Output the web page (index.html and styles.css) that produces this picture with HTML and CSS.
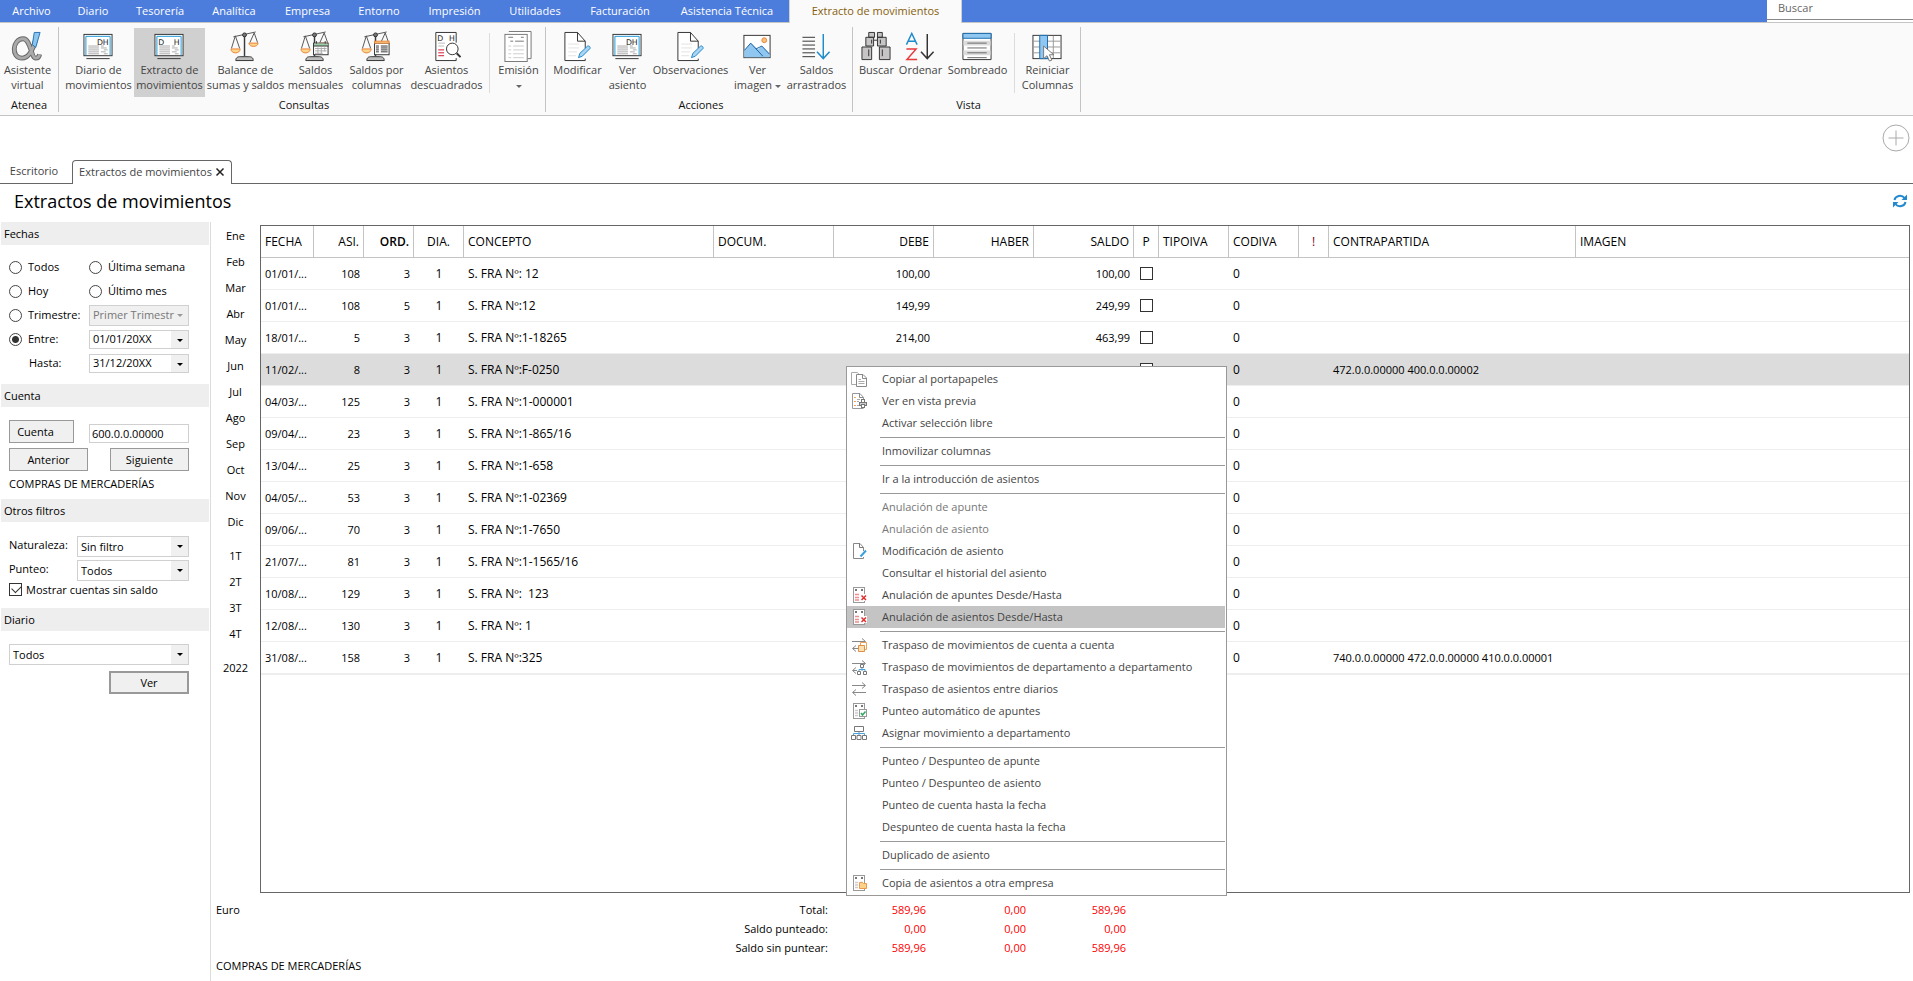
FILE: index.html
```html
<!DOCTYPE html>
<html lang="es">
<head>
<meta charset="utf-8">
<title>Extractos de movimientos</title>
<link rel="stylesheet" href="styles.css">
</head>
<body>
<svg class="defs" aria-hidden="true">
  <defs>
    <symbol id="scales" viewBox="0 0 32 32">
      <path d="M15.500 5V26" stroke="#3b3b3b" stroke-width="1.500" fill="none"/>
      <path d="M4 6L27 1M6 5L2 18M6 5L10.500 18M25.500 2L21 12M25.500 2L29 12" stroke="#555" fill="none"/>
      <circle cx="15.500" cy="4" r="2" fill="#777" stroke="#333"/>
      <path d="M1.500 18.500H11C11 24 1.500 24 1.500 18.500ZM20 12.500H29.500C29.500 17 20 17 20 12.500Z" fill="#fbd58a" stroke="#e8833a"/>
      <path d="M6.500 30.500C6.500 27 9 26.500 11 26.500H20C22 26.500 24.500 27 24.500 30.500Z" fill="#bdbdbd" stroke="#333"/>
    </symbol>
    <symbol id="sheet-pen" viewBox="0 0 32 32">
      <path d="M24.500 18V10.500L16.500 1.500H3.500V30.500H24.500V28.500" fill="#fff" stroke="#333"/>
      <path d="M16.500 1.500V10.500H24.500" fill="none" stroke="#333"/>
      <path d="M7 13.500H18M7 17.500H18M7 21.500H16M7 25.500H15" stroke="#e2e2e2"/>
      <path d="M17.500 27.500L19 23L27 15.500C28.500 15 30 16.500 29.500 18L21.500 26Z" fill="#a9d4f2" stroke="#2389c9"/>
    </symbol>
    <symbol id="journal" viewBox="0 0 32 32">
      <rect x="1.500" y="3.500" width="29" height="22" fill="#fff" stroke="#333"/>
      <path d="M3.500 25V5.500H28.500V25" fill="none" stroke="#1c9ad6"/>
      <path d="M6 15.500H17M6 17.500H17M6 19.500H17M6 21.500H17M6 23.500H17M19 15.500H22M19 17.500H25M22 19.500H26M19 21.500H24M22 23.500H26" stroke="#aaa"/>
      <path d="M4 28.500H28" stroke="#333"/>
    </symbol>
    <symbol id="mini-sheet" viewBox="0 0 16 16">
      <rect x="2.500" y=".5" width="11" height="15" fill="#fff" stroke="#999"/>
      <path d="M4 3H6M10 3H12" stroke="#777" stroke-width="2"/>
      <path d="M4 7.500H7M4 10H7M4 12.500H7M9 7.500H12" stroke="#ccc" stroke-width="1.500"/>
    </symbol>
    <symbol id="mini-void" viewBox="0 0 16 16">
      <rect x="2.500" y=".5" width="11" height="15" fill="#fff" stroke="#999"/>
      <path d="M4 3H6M10 3H12" stroke="#777" stroke-width="2"/>
      <path d="M4 7.500H8M4 10.500H8M4 13H8" stroke="#f08c8c" stroke-width="1.500"/>
      <path d="M9 7H16V14H9Z" fill="#fff"/>
      <path d="M10.500 8.500L15 13M15 8.500L10.500 13" stroke="#e03030" stroke-width="1.500"/>
    </symbol>
    <symbol id="swap" viewBox="0 0 16 16">
      <path d="M1 4.500H14M11 1.500L14.500 4.500L11 7.500M15 11.500H2M5 8.500L1.500 11.500L5 14.500" fill="none" stroke="#888"/>
    </symbol>
  </defs>
</svg>

<header class="top">
  <nav class="menubar">
    <button>Archivo</button><button>Diario</button><button>Tesorería</button><button>Analítica</button><button>Empresa</button><button>Entorno</button><button>Impresión</button><button>Utilidades</button><button>Facturación</button><button>Asistencia Técnica</button><button class="current">Extracto de movimientos</button>
  </nav>
  <input class="search" type="text" placeholder="Buscar" aria-label="Buscar">
</header>

<section class="ribbon">
  <div class="group g-atenea">
    <div class="tools">
      <button class="tool"><svg class="ico" viewBox="0 0 32 32"><path d="M25 9C22 20 18 28 11 28C-1 28 1 8 12 8C20 8 20 28 25 28C27 28 28.500 27 29 24" fill="none" stroke="#666" stroke-width="5"/><path d="M25 9C22 20 18 28 11 28C-1 28 1 8 12 8C20 8 20 28 25 28C27 28 28.500 27 29 24" fill="none" stroke="#aaa" stroke-width="3"/><path d="M23.500 1.500L29.500 1.500L25 17L21.500 14Z" fill="#8cc6ee" stroke="#2874b5"/></svg><span>Asistente<br>virtual</span></button>
    </div>
    <h2>Atenea</h2>
  </div>
  <div class="group g-consultas">
    <div class="tools">
      <button class="tool"><svg class="ico" viewBox="0 0 32 32"><use href="#journal"/><text x="15" y="14" class="dh">D</text><text x="21" y="14" class="dh">H</text></svg><span>Diario de<br>movimientos</span></button>
      <button class="tool pressed"><svg class="ico" viewBox="0 0 32 32"><use href="#journal"/><text x="5" y="14" class="dh">D</text><text x="21" y="14" class="dh">H</text></svg><span>Extracto de<br>movimientos</span></button>
      <button class="tool"><svg class="ico"><use href="#scales"/></svg><span>Balance de<br>sumas y saldos</span></button>
      <button class="tool"><svg class="ico" viewBox="0 0 32 32"><use href="#scales"/><rect x="14.500" y="12.500" width="15" height="12" fill="#fff" stroke="#333"/><path d="M15 13H29V15.500H15Z" fill="#9ecfa8"/><path d="M17.500 10.500V13M26.500 10.500V13M14 15.500H30" stroke="#333"/><path d="M16 18H28M16 20.500H28M16 23H24M19 17V24M22.500 17V24M26 17V21" stroke="#aaa"/></svg><span>Saldos<br>mensuales</span></button>
      <button class="tool"><svg class="ico" viewBox="0 0 32 32"><use href="#scales"/><rect x="14.500" y="12.500" width="15" height="12" fill="#fff" stroke="#333"/><rect x="14.500" y="10.500" width="15" height="2" fill="#fbd58a" stroke="#e8833a"/><path d="M16 15.500H19M21 15.500H28M16 17.500H19M21 17.500H28M16 19.500H19M21 19.500H28M16 21.500H19M21 21.500H28" stroke="#333"/></svg><span>Saldos por<br>columnas</span></button>
      <button class="tool"><svg class="ico" viewBox="0 0 32 32"><path d="M26.500 12V1.500H5.500V30.500H26.500V28" fill="#fff" stroke="#333"/><text x="7" y="10" class="dh">D</text><text x="19" y="10" class="dh">H</text><path d="M8 12.500H15M8 15.500H14" stroke="#bbb"/><path d="M8 19.500H14M8 22.500H14M8 25.500H14" stroke="#d4122c"/><circle cx="22.500" cy="18.500" r="6" fill="#fff" stroke="#333"/><path d="M27 23L31 27" stroke="#333" stroke-width="2"/></svg><span>Asientos<br>descuadrados</span></button>
      <i class="rule"></i>
      <button class="tool"><svg class="ico" viewBox="0 0 32 32"><path d="M6.500 .5H29.500V28.500H26" fill="#fff" stroke="#777"/><rect x="2.500" y="3.500" width="23" height="28" fill="#fff" stroke="#777"/><path d="M6 6.500H11M19 6.500H22M8 10.500H11M13 10.500H22" stroke="#777"/><path d="M6 15.500H9M11 15.500H22M6 19.500H9M11 19.500H22M6 23.500H9M11 23.500H22M6 27.500H9M11 27.500H22" stroke="#ccc"/></svg><span>Emisión<br><i class="tri"></i></span></button>
    </div>
    <h2>Consultas</h2>
  </div>
  <div class="group g-acciones">
    <div class="tools">
      <button class="tool"><svg class="ico"><use href="#sheet-pen"/></svg><span>Modificar</span></button>
      <button class="tool"><svg class="ico" viewBox="0 0 32 32"><use href="#journal"/><text x="15" y="14" class="dh">D</text><text x="21" y="14" class="dh">H</text></svg><span>Ver<br>asiento</span></button>
      <button class="tool"><svg class="ico"><use href="#sheet-pen"/></svg><span>Observaciones</span></button>
      <button class="tool"><svg class="ico" viewBox="0 0 32 32"><rect x="2.500" y="4.500" width="27" height="23" fill="#fff" stroke="#333"/><path d="M3 20L9.500 12.500L17 19L21 15.500L29 23.500V27H3Z" fill="#8fc7f0"/><path d="M3 20L9.500 12.500L22 26M15 18.500L21 15.500L29 24" fill="none" stroke="#1a5fa0"/><circle cx="23.500" cy="9.500" r="2.500" fill="#fbc07c" stroke="#e8833a"/></svg><span>Ver<br>imagen <i class="tri"></i></span></button>
      <button class="tool"><svg class="ico" viewBox="0 0 32 32"><path d="M2 6.500H15M2 10.500H15M2 14.500H15M2 18.500H15M2 22.500H15M2 26.500H15" stroke="#333"/><path d="M23.500 3V28M17 21.500L23.500 28.500L30 21.500" fill="none" stroke="#1f8ccb" stroke-width="1.500"/></svg><span>Saldos<br>arrastrados</span></button>
    </div>
    <h2>Acciones</h2>
  </div>
  <div class="group g-vista">
    <div class="tools">
      <button class="tool"><svg class="ico" viewBox="0 0 32 32"><g fill="#c6c4c4" stroke="#333"><path d="M8.500 1.500H14.500V6.500H8.500ZM17.500 1.500H22.500V6.500H17.500ZM5.500 6.500H13.500V15.500H5.500ZM17.500 6.500H26.500V15.500H17.500ZM1.500 16.500H11.500V29.500H1.500ZM19.500 16.500H30.500V29.500H19.500Z"/><path d="M11.500 9V13M20.500 9V13M8.500 19V26M22.500 19V26M14 9.500H17"/></g></svg><span>Buscar</span></button>
      <button class="tool"><svg class="ico" viewBox="0 0 32 32"><path d="M2 14L7.500 2.500L13 14M4 10.500H11" fill="none" stroke="#1f8ccb" stroke-width="1.500"/><path d="M2 18.500H12L2.500 29.500H13" fill="none" stroke="#e8393c" stroke-width="1.500"/><path d="M23.500 3V28M17 21.500L23.500 28.500L30 21.500" fill="none" stroke="#333" stroke-width="1.500"/></svg><span>Ordenar</span></button>
      <button class="tool"><svg class="ico" viewBox="0 0 32 32"><path d="M1.500 2.500H30.500V29.500H1.500Z" fill="#fff" stroke="#333"/><path d="M2 10H30V15H2ZM2 20H30V25H2Z" fill="#dcdcdc"/><path d="M1.500 2.500H30.500V7.500H1.500Z" fill="#8fc7f0" stroke="#1a6db0"/><path d="M6 12.500H26M6 17.500H26M6 22.500H26M6 27.500H26" stroke="#666"/></svg><span>Sombreado</span></button>
      <i class="rule"></i>
      <button class="tool"><svg class="ico" viewBox="0 0 32 32"><rect x="1.500" y="4.500" width="29" height="24" fill="#fff" stroke="#333"/><path d="M2 10.500H30M2 16.500H30M2 22.500H30M22.500 5V28" stroke="#999"/><path d="M8.500 4.500H16.500V28.500H8.500Z" fill="#8fc7f0" stroke="#1a6db0"/><path d="M12.500 15.500V28.500L16 25.500L18.500 31L21 30L18.500 24.500H23Z" fill="#fff" stroke="#777"/></svg><span>Reiniciar<br>Columnas</span></button>
    </div>
    <h2>Vista</h2>
  </div>
</section>

<div class="strip">
  <div class="tabs">
    <button class="tab">Escritorio</button>
    <button class="tab open">Extractos de movimientos <svg viewBox="0 0 10 10" class="close"><path d="M1.500 1.500L8.500 8.500M8.500 1.500L1.500 8.500" stroke="#222" stroke-width="1.500"/></svg></button>
  </div>
  <button class="add" aria-label="Añadir"><svg viewBox="0 0 28 28"><circle cx="14" cy="14" r="13" fill="none" stroke="#aaa"/><path d="M6.500 14H21.500M14 6.500V21.500" stroke="#aaa"/></svg></button>
</div>

<div class="titlebar">
  <h1>Extractos de movimientos</h1>
  <button class="refresh" aria-label="Actualizar"><svg viewBox="0 0 14 14"><path d="M1.500 6A5.500 5 0 0 1 11.500 4M12.500 8A5.500 5 0 0 1 2.500 10" fill="none" stroke="#2389cf" stroke-width="2"/><path d="M14 .5V6H8.500ZM0 13.500V8H5.500Z" fill="#2389cf"/></svg></button>
</div>

<main class="work">
  <aside class="filters">
    <section>
      <h3>Fechas</h3>
      <div class="dates">
        <label><input type="radio" name="rango">Todos</label>
        <label><input type="radio" name="rango">Última semana</label>
        <label><input type="radio" name="rango">Hoy</label>
        <label><input type="radio" name="rango">Último mes</label>
        <label><input type="radio" name="rango">Trimestre:</label>
        <span class="pick off"><select disabled aria-label="Trimestre"><option>Primer Trimestr</option></select></span>
        <label><input type="radio" name="rango" checked>Entre:</label>
        <span class="pick date"><input type="text" value="01/01/20XX" aria-label="Desde"></span>
        <label class="until" for="hasta">Hasta:</label>
        <span class="pick date"><input type="text" id="hasta" value="31/12/20XX"></span>
      </div>
    </section>
    <section>
      <h3>Cuenta</h3>
      <div class="account">
        <div class="line"><button class="btn short">Cuenta</button><input class="field" type="text" value="600.0.0.00000" aria-label="Cuenta"></div>
        <div class="line"><button class="btn half">Anterior</button><button class="btn half">Siguiente</button></div>
        <p>COMPRAS DE MERCADERÍAS</p>
      </div>
    </section>
    <section>
      <h3>Otros filtros</h3>
      <div class="others">
        <label for="nat">Naturaleza:</label><span class="pick"><select id="nat"><option>Sin filtro</option></select></span>
        <label for="pun">Punteo:</label><span class="pick"><select id="pun"><option>Todos</option></select></span>
      </div>
      <label class="check"><input type="checkbox" checked>Mostrar cuentas sin saldo</label>
    </section>
    <section>
      <h3>Diario</h3>
      <div class="journal-pick">
        <span class="pick"><select aria-label="Diario"><option>Todos</option></select></span>
        <button class="btn go">Ver</button>
      </div>
    </section>
  </aside>

  <div class="content">
    <div class="upper">
      <nav class="months">
        <button>Ene</button><button>Feb</button><button>Mar</button><button>Abr</button><button>May</button><button>Jun</button><button>Jul</button><button>Ago</button><button>Sep</button><button>Oct</button><button>Nov</button><button>Dic</button>
        <button class="apart">1T</button><button>2T</button><button>3T</button><button>4T</button>
        <button class="apart">2022</button>
      </nav>
      <div class="grid">
        <table>
          <colgroup><col class="w53"><col class="w50"><col class="w50"><col class="w50"><col class="w250"><col class="w120"><col class="w100"><col class="w100"><col class="w100"><col class="w25"><col class="w70"><col class="w70"><col class="w30"><col class="w247"><col></colgroup>
          <thead><tr><th>FECHA</th><th class="r">ASI.</th><th class="r b">ORD.</th><th class="c">DIA.</th><th>CONCEPTO</th><th>DOCUM.</th><th class="r">DEBE</th><th class="r">HABER</th><th class="r">SALDO</th><th class="c">P</th><th>TIPOIVA</th><th>CODIVA</th><th class="c warn">!</th><th>CONTRAPARTIDA</th><th>IMAGEN</th></tr></thead>
          <tbody>
            <tr><td>01/01/...</td><td class="r">108</td><td class="r">3</td><td class="c">1</td><td>S. FRA Nº: 12</td><td></td><td class="r">100,00</td><td></td><td class="r">100,00</td><td class="c"><input type="checkbox" aria-label="Punteado"></td><td></td><td>0</td><td></td><td></td><td></td></tr>
            <tr><td>01/01/...</td><td class="r">108</td><td class="r">5</td><td class="c">1</td><td>S. FRA Nº:12</td><td></td><td class="r">149,99</td><td></td><td class="r">249,99</td><td class="c"><input type="checkbox" aria-label="Punteado"></td><td></td><td>0</td><td></td><td></td><td></td></tr>
            <tr><td>18/01/...</td><td class="r">5</td><td class="r">3</td><td class="c">1</td><td>S. FRA Nº:1-18265</td><td></td><td class="r">214,00</td><td></td><td class="r">463,99</td><td class="c"><input type="checkbox" aria-label="Punteado"></td><td></td><td>0</td><td></td><td></td><td></td></tr>
            <tr class="picked"><td>11/02/...</td><td class="r">8</td><td class="r">3</td><td class="c">1</td><td>S. FRA Nº:F-0250</td><td></td><td class="r">125,97</td><td></td><td class="r">589,96</td><td class="c"><input type="checkbox" aria-label="Punteado"></td><td></td><td>0</td><td></td><td class="n">472.0.0.00000 400.0.0.00002</td><td></td></tr>
            <tr><td>04/03/...</td><td class="r">125</td><td class="r">3</td><td class="c">1</td><td>S. FRA Nº:1-000001</td><td></td><td></td><td></td><td></td><td></td><td></td><td>0</td><td></td><td></td><td></td></tr>
            <tr><td>09/04/...</td><td class="r">23</td><td class="r">3</td><td class="c">1</td><td>S. FRA Nº:1-865/16</td><td></td><td></td><td></td><td></td><td></td><td></td><td>0</td><td></td><td></td><td></td></tr>
            <tr><td>13/04/...</td><td class="r">25</td><td class="r">3</td><td class="c">1</td><td>S. FRA Nº:1-658</td><td></td><td></td><td></td><td></td><td></td><td></td><td>0</td><td></td><td></td><td></td></tr>
            <tr><td>04/05/...</td><td class="r">53</td><td class="r">3</td><td class="c">1</td><td>S. FRA Nº:1-02369</td><td></td><td></td><td></td><td></td><td></td><td></td><td>0</td><td></td><td></td><td></td></tr>
            <tr><td>09/06/...</td><td class="r">70</td><td class="r">3</td><td class="c">1</td><td>S. FRA Nº:1-7650</td><td></td><td></td><td></td><td></td><td></td><td></td><td>0</td><td></td><td></td><td></td></tr>
            <tr><td>21/07/...</td><td class="r">81</td><td class="r">3</td><td class="c">1</td><td>S. FRA Nº:1-1565/16</td><td></td><td></td><td></td><td></td><td></td><td></td><td>0</td><td></td><td></td><td></td></tr>
            <tr><td>10/08/...</td><td class="r">129</td><td class="r">3</td><td class="c">1</td><td>S. FRA Nº:&nbsp; 123</td><td></td><td></td><td></td><td></td><td></td><td></td><td>0</td><td></td><td></td><td></td></tr>
            <tr><td>12/08/...</td><td class="r">130</td><td class="r">3</td><td class="c">1</td><td>S. FRA Nº: 1</td><td></td><td></td><td></td><td></td><td></td><td></td><td>0</td><td></td><td></td><td></td></tr>
            <tr class="last"><td>31/08/...</td><td class="r">158</td><td class="r">3</td><td class="c">1</td><td>S. FRA Nº:325</td><td></td><td></td><td></td><td></td><td></td><td></td><td>0</td><td></td><td class="n">740.0.0.00000 472.0.0.00000 410.0.0.00001</td><td></td></tr>
          </tbody>
        </table>
      </div>
    </div>
    <footer class="sums">
      <span>Euro</span>
      <table>
        <tr><th>Total:</th><td>589,96</td><td>0,00</td><td>589,96</td></tr>
        <tr><th>Saldo punteado:</th><td>0,00</td><td>0,00</td><td>0,00</td></tr>
        <tr><th>Saldo sin puntear:</th><td>589,96</td><td>0,00</td><td>589,96</td></tr>
      </table>
    </footer>
    <p class="account-name">COMPRAS DE MERCADERÍAS</p>
  </div>
</main>

<div class="popup" role="menu">
  <button><svg viewBox="0 0 16 16"><path d="M.5 1.500H6.500L8.500 4V13.500H.5Z" fill="#fff" stroke="#aaa"/><path d="M5.500 3.500H12L15.500 7V15.500H5.500Z" fill="#fff" stroke="#888"/><path d="M11.500 3.500V7.500H15.500" fill="none" stroke="#888"/><path d="M7.500 8.500H10M7.500 10.500H13.500M7.500 12.500H13.500" stroke="#aaa"/></svg>Copiar al portapapeles</button>
  <button><svg viewBox="0 0 16 16"><path d="M12.500 6V4.500L9 .5H1.500V15.500H12.500" fill="#fff" stroke="#999"/><path d="M8.500 .5V4.500H12.500" fill="none" stroke="#888"/><path d="M3 4.500H5M3 8.500H5M3 12.500H5" stroke="#f3a65a"/><path d="M6 6.500H9M6 8.500H8M6 12.500H8" stroke="#aaa"/><rect x="8.500" y="9.500" width="7" height="3" fill="#ccc" stroke="#777"/><rect x="10.500" y="6.500" width="3" height="3" fill="#fff" stroke="#777"/><rect x="10.500" y="11.500" width="3" height="3" fill="#fff" stroke="#777"/></svg>Ver en vista previa</button>
  <button><i></i>Activar selección libre</button>
  <hr>
  <button><i></i>Inmovilizar columnas</button>
  <hr>
  <button><i></i>Ir a la introducción de asientos</button>
  <hr>
  <button disabled><i></i>Anulación de apunte</button>
  <button disabled><i></i>Anulación de asiento</button>
  <button><svg viewBox="0 0 16 16"><path d="M12.500 8V4.500L9 .5H2.500V15.500H12.500V14" fill="#fff" stroke="#888"/><path d="M8.500 .5V4.500H12.500" fill="none" stroke="#777"/><path d="M9.500 13.500L15 7.500" stroke="#3b9fdc" stroke-width="2"/></svg>Modificación de asiento</button>
  <button><i></i>Consultar el historial del asiento</button>
  <button><svg><use href="#mini-void"/></svg>Anulación de apuntes Desde/Hasta</button>
  <button class="hover"><svg><use href="#mini-void"/></svg>Anulación de asientos Desde/Hasta</button>
  <hr>
  <button><svg viewBox="0 0 16 16"><use href="#swap"/><path d="M9.500 5.500H15.500V12.500H9.500Z" fill="#fff" stroke="#eba45c"/><path d="M7.500 8.500H13.500V14.500H7.500Z" fill="#fde0b0" stroke="#e09048"/></svg>Traspaso de movimientos de cuenta a cuenta</button>
  <button><svg viewBox="0 0 16 16"><use href="#swap"/><path d="M6 6H16V16H6Z" fill="#fff"/><path d="M11 9V12M8 12V10.500H14V12" fill="none" stroke="#4aa3df"/><path d="M9.500 5.500H12.500V8.500H9.500ZM6.500 12.500H9.500V15.500H6.500ZM12.500 12.500H15.500V15.500H12.500Z" fill="#fff" stroke="#777"/></svg>Traspaso de movimientos de departamento a departamento</button>
  <button><svg><use href="#swap"/></svg>Traspaso de asientos entre diarios</button>
  <button><svg viewBox="0 0 16 16"><use href="#mini-sheet"/><rect x="8.500" y="6.500" width="7" height="7" fill="#fff" stroke="#999"/><path d="M10 10L11.500 12L14.500 8.500" fill="none" stroke="#2eab62" stroke-width="1.500"/></svg>Punteo automático de apuntes</button>
  <button><svg viewBox="0 0 16 16"><path d="M8 6V10M2.500 11V8.500H13.500V11" fill="none" stroke="#4aa3df"/><path d="M3.500 1.500H12.500V6.500H3.500ZM.5 10.500H4.500V14.500H.5ZM6 10.500H10V14.500H6ZM11.500 10.500H15.500V14.500H11.500Z" fill="#fff" stroke="#777"/></svg>Asignar movimiento a departamento</button>
  <hr>
  <button><i></i>Punteo / Despunteo de apunte</button>
  <button><i></i>Punteo / Despunteo de asiento</button>
  <button><i></i>Punteo de cuenta hasta la fecha</button>
  <button><i></i>Despunteo de cuenta hasta la fecha</button>
  <hr>
  <button><i></i>Duplicado de asiento</button>
  <hr>
  <button><svg viewBox="0 0 16 16"><use href="#mini-sheet"/><path d="M8.500 7.500H11.500L12.500 8.500H15.500V13.500H8.500Z" fill="#fcd28a" stroke="#eb9a4c"/></svg>Copia de asientos a otra empresa</button>
</div>
</body>
</html>
```

FILE: styles.css
```css
* { box-sizing: border-box; margin: 0; padding: 0; }
body {
  display: flex;
  flex-direction: column;
  min-height: 100vh;
  font: 11px/16px "Open Sans", "Noto Sans", sans-serif;
  color: #000;
  background: #fff;
}
button, input, select { font: inherit; color: inherit; background: none; border: 0; }
h1, h2, h3, th { font-weight: 400; }
.defs { position: absolute; width: 0; height: 0; }

/* Menu bar */
.top { display: flex; height: 23px; background: #4c7cdc; border-bottom: 1px solid #c4c4c4; }
.menubar { display: grid; grid-template-columns: 63px 60px 74px 74px 73px 70px 81px 80px 90px 124px 173px; flex: 1; }
.menubar button { height: 23px; padding-bottom: 2px; color: #fff; white-space: nowrap; }
.menubar .current { background: #fafafa; color: #86600c; border: solid #d0d0d0; border-width: 0 1px; }
.search { width: 146px; height: 20px; padding: 0 0 4px 11px; background: #fff; border-bottom: 1px solid #888; box-shadow: 0 2px #fff; }
.search::placeholder { color: #666; opacity: 1; }

/* Ribbon */
.ribbon { display: flex; height: 93px; padding-top: 4px; background: #fafafa; border-bottom: 1px solid #c4c4c4; }
.group { display: flex; flex-direction: column; height: 85px; border-right: 1px solid #c4c4c4; }
.g-atenea { width: 59px; }
.g-consultas { width: 487px; padding-left: 4px; }
.g-acciones { width: 307px; padding-left: 4px; }
.g-vista { width: 228px; padding-left: 4px; }
.tools { display: grid; height: 72px; padding-top: 1px; }
.g-atenea .tools { grid-template-columns: 55px; }
.g-consultas .tools { grid-template-columns: 71px 71px 81px 59px 63px 77px 10px 47px; }
.g-acciones .tools { grid-template-columns: 55px 45px 81px 53px 65px; }
.g-vista .tools { grid-template-columns: 39px 49px 65px 9px 57px; }
.tool { display: flex; flex-direction: column; align-items: center; height: 69px; padding-top: 3px; line-height: 15px; color: #444; white-space: nowrap; }
.tool.pressed { background: #d0d0d0; }
.ico { width: 32px; height: 31px; margin-right: 1px; flex: none; overflow: visible; }
.dh { font: 8px "DejaVu Sans", sans-serif; fill: #222; }
.rule { width: 1px; height: 60px; margin: 5px 0 0 4px; background: #dcdcdc; }
.tri { display: inline-block; border: 3px solid transparent; border-top-color: #666; border-bottom: 0; vertical-align: middle; }
.group h2 { font-size: 11px; line-height: 16px; text-align: center; color: #111; }

/* Tabs */
.strip { display: flex; justify-content: space-between; height: 68px; padding-right: 3px; border-bottom: 1px solid #666; }
.tabs { display: flex; align-items: flex-end; }
.tab { height: 24px; color: #444; white-space: nowrap; }
.tab:first-child { width: 72px; padding-right: 4px; }
.tab.open { display: flex; align-items: center; justify-content: center; gap: 3px; width: 160px; margin-bottom: -1px; padding-bottom: 2px; background: #fff; border: 1px solid #666; border-bottom: 0; border-radius: 4px 4px 0 0; }
.close { width: 10px; height: 10px; }
.add { width: 28px; height: 28px; margin-top: 8px; }
.add svg { display: block; }
.titlebar { display: flex; justify-content: space-between; align-items: center; height: 38px; padding: 0 6px 4px 14px; }
.titlebar h1 { font-size: 18px; line-height: 24px; }
.refresh { width: 14px; height: 14px; }
.refresh svg { display: block; }

/* Filters */
.work { display: flex; flex: 1; }
.filters { width: 211px; padding: 0 1px; border-right: 1px solid #dcdcdc; }
.filters h3 { height: 23px; padding-left: 3px; font-size: 11px; line-height: 23px; background: #eee; }
.filters label { display: flex; align-items: center; white-space: nowrap; }
.dates { display: grid; grid-template-columns: 80px 100px; grid-auto-rows: 24px; align-items: center; padding: 10px 8px 9px; }
.until { padding-left: 20px; }
input[type="radio"] { appearance: none; width: 13px; height: 13px; margin-right: 6px; border: 1px solid #444; border-radius: 50%; background: #fff; }
input[type="radio"]:checked { background: radial-gradient(circle, #333 3px, #fff 4px); }
input[type="checkbox"] { appearance: none; width: 13px; height: 13px; border: 1px solid #333; background: #fff; }
.pick { position: relative; display: flex; height: 21px; border: 1px solid #d0d0d0; background: #fff; }
.pick select, .pick input { appearance: none; flex: 1; min-width: 0; padding: 0 0 0 3px; }
.pick::after { content: ""; width: 17px; flex: none; background: #f0f0f0; }
.pick::before { content: ""; position: absolute; right: 5px; top: 8px; border: 3px solid transparent; border-top-color: #000; border-bottom: 0; }
.pick.date { height: 19px; }
.pick.off { background: #f0f0f0; color: #888; }
.pick.off::before { border-top-color: #999; }
.pick.off::after { width: 10px; }
.pick.off select { opacity: 1; color: #777; }
.account { padding: 13px 20px 7px 8px; }
.line { display: flex; justify-content: space-between; align-items: flex-end; margin-bottom: 5px; }
.btn { height: 23px; background: #f0f0f0; border: 1px solid #999; }
.short { width: 65px; padding-right: 12px; }
.half { width: 79px; }
.field { width: 100px; height: 19px; padding-left: 2px; border: 1px solid #d0d0d0; }
.others { display: grid; grid-template-columns: 68px 112px; row-gap: 3px; padding: 14px 8px 2px; }
.others label { height: 18px; }
.check { height: 13px; margin: 0 8px 12px; }
.check input { position: relative; margin-right: 4px; }
.check input:checked::after { content: ""; position: absolute; left: 2px; top: 1px; width: 8px; height: 5px; border: solid #333; border-width: 0 0 1px 1px; transform: rotate(-45deg); }
.journal-pick { display: flex; flex-direction: column; gap: 6px; padding: 13px 20px 0 8px; }
.go { width: 80px; border-width: 2px; align-self: flex-end; }

/* Content */
.content { display: flex; flex-direction: column; flex: 1; min-width: 0; padding: 3px 3px 6px 0; }
.upper { display: flex; flex: 1; }
.months { display: flex; flex-direction: column; width: 49px; }
.months button { height: 26px; padding-bottom: 4px; }
.months .apart { margin-top: 8px; }
.grid { flex: 1; min-width: 0; border: 1px solid #666; }
.grid table { width: 100%; table-layout: fixed; border-collapse: separate; border-spacing: 0; font-size: 12px; }
.grid th, .grid td { height: 32px; padding: 0 4px; text-align: left; white-space: nowrap; overflow: hidden; border-bottom: 1px solid #eee; }
.grid th { border-bottom-color: #c4c4c4; border-right: 1px solid #c4c4c4; }
.grid th:last-child { border-right: 0; }
.grid .r { text-align: right; }
.grid td.r, .grid td.n, .grid td:first-child { font-size: 11px; }
.grid .c { text-align: center; padding: 0; }
.grid .c input { display: block; margin: 0 auto; }
.grid .b { font-weight: 600; }
.grid .warn { color: #800020; }
.grid .picked td { background: #dcdcdc; }
.grid .last td { height: 33px; border-bottom-width: 2px; }
.w25 { width: 25px; } .w30 { width: 30px; } .w50 { width: 50px; } .w53 { width: 53px; } .w70 { width: 70px; }
.w100 { width: 100px; } .w120 { width: 120px; } .w247 { width: 247px; } .w250 { width: 250px; }
.sums { display: flex; height: 64px; padding: 7px 0 0 5px; }
.sums > span { width: 412px; line-height: 19px; }
.sums table { border-spacing: 0; height: 57px; table-layout: fixed; width: 500px; }
.sums th, .sums td { width: 100px; height: 19px; text-align: right; color: #f00; }
.sums td { padding-right: 2px; }
.sums th { width: 200px; padding-right: 0; color: #000; }
.account-name { padding-left: 5px; line-height: 18px; }

/* Context menu */
.popup { position: absolute; left: 846px; top: 366px; width: 381px; padding: 1px 1px 1px 0; background: #fff; border: 1px solid #999; }
.popup button { display: flex; align-items: center; gap: 15px; width: 100%; height: 22px; padding-left: 4px; color: #444; white-space: nowrap; }
.popup svg, .popup i { width: 16px; height: 16px; flex: none; }
.popup button:disabled { color: #777; }
.popup .hover { background: #c4c4c4; }
.popup hr { height: 1px; margin: 3px 0 2px 33px; border: 0; background: #999; }
```
